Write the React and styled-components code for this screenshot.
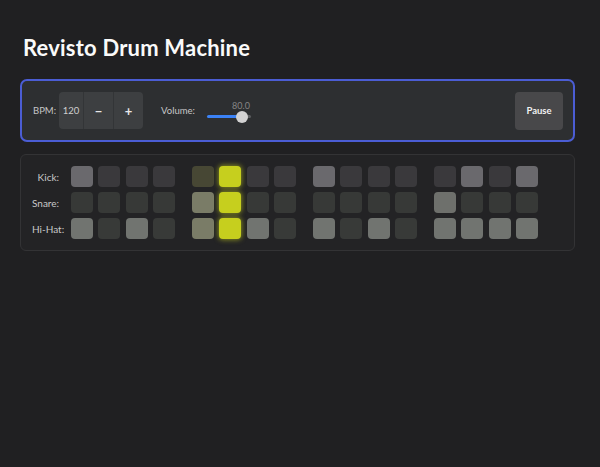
import React from "react";
import styled, { createGlobalStyle, css } from "styled-components";

const Global = createGlobalStyle`
  html, body { margin: 0; padding: 0; background: #202022; }
  body { font-family: Lato, "Noto Sans", "DejaVu Sans", sans-serif; color: #ddd; height: 467px; overflow: hidden; }
`;

const Page = styled.div`
  width: 555px;
  padding: 30px 0 0 20px;
  display: flex;
  flex-direction: column;
`;

const Title = styled.h1`
  margin: 0 0 13px 3px;
  font-size: 22px;
  font-weight: 700;
  color: #fafafa;
  line-height: 36px;
  letter-spacing: 0.2px;
`;

const Controls = styled.div`
  display: flex;
  align-items: center;
  height: 59px;
  padding: 0 10px 0 11px;
  border: 2px solid #4b5dd4;
  border-radius: 7px;
  background: #2d2f31;
`;

const Label = styled.span`
  font-size: 9.5px;
  color: #c6c6c6;
  margin-right: ${(p) => p.$mr || 0}px;
`;

const Stepper = styled.div`
  display: flex;
  height: 37px;
  border-radius: 4px;
  overflow: hidden;
  background: #3d3f41;
  margin-right: 18px;
`;

const StepValue = styled.div`
  width: 24px;
  display: flex;
  align-items: center;
  justify-content: center;
  font-size: 9.5px;
  color: #cfcfcf;
`;

const StepButton = styled.div`
  box-sizing: border-box;
  width: 30px;
  display: flex;
  align-items: center;
  justify-content: center;
  border-left: 1px solid #333537;
  font-size: 13px;
  font-weight: 700;
  color: #e8e8e8;
`;

const Slider = styled.div`
  width: 44px;
  display: flex;
  flex-direction: column;
  margin-top: 1px;
`;

const SliderValue = styled.div`
  font-size: 9px;
  line-height: 11px;
  height: 11px;
  text-align: right;
  padding-right: 1px;
  color: #858585;
`;

const TrackWrap = styled.div`
  position: relative;
  height: 12px;
  display: flex;
  align-items: center;
`;

const Track = styled.div`
  width: 100%;
  height: 3px;
  border-radius: 2px;
  background: linear-gradient(to right, #3b82f6 0 78%, #5a5c5e 78% 100%);
`;

const Thumb = styled.div`
  position: absolute;
  left: 29px;
  top: 0;
  width: 12px;
  height: 12px;
  border-radius: 50%;
  background: #d2d2d2;
`;

const Spacer = styled.div`
  flex: 1;
`;

const PauseButton = styled.button`
  width: 48px;
  height: 38px;
  border: none;
  border-radius: 4px;
  background: #48484a;
  color: #f2f2f2;
  font-family: inherit;
  font-size: 9.5px;
  font-weight: 700;
  padding: 0;
`;

const Sequencer = styled.div`
  margin-top: 12px;
  padding: 11px;
  border: 1px solid #333335;
  border-radius: 6px;
  background: #232325;
  display: flex;
  flex-direction: column;
  gap: 5px;
`;

const Row = styled.div`
  display: flex;
  align-items: center;
`;

const RowLabel = styled.div`
  width: 27px;
  margin-right: 12px;
  text-align: right;
  font-size: 10px;
  color: #c8c8c8;
  white-space: nowrap;
`;

const Groups = styled.div`
  display: flex;
  gap: 17px;
`;

const Group = styled.div`
  display: flex;
  gap: 5.33px;
`;

const palette = {
  kick: { on: "#6a696d", off: "#3a393c" },
  snare: { on: "#6e706c", off: "#373937" },
  hihat: { on: "#717470", off: "#383a38" },
};

const Cell = styled.div`
  width: 22px;
  height: 21px;
  border-radius: 4px;
  background: ${(p) => (p.$on ? palette[p.$kind].on : palette[p.$kind].off)};
  ${(p) =>
    p.$prev &&
    css`
      background: ${p.$on ? "#7a7c67" : "#474734"};
    `}
  ${(p) =>
    p.$current &&
    css`
      background: #c6cf1e;
      box-shadow: 0 0 5px 1px rgba(205, 215, 30, 0.55);
    `}
`;

const rows = [
  { name: "Kick:", kind: "kick", pattern: "1000000010000101" },
  { name: "Snare:", kind: "snare", pattern: "0000110000001000" },
  { name: "Hi-Hat:", kind: "hihat", pattern: "1010111010101111" },
];

export default function App() {
  return (
    <>
      <Global />
      <Page>
        <Title>Revisto Drum Machine</Title>
        <Controls>
          <Label $mr={3}>BPM:</Label>
          <Stepper>
            <StepValue>120</StepValue>
            <StepButton>−</StepButton>
            <StepButton>+</StepButton>
          </Stepper>
          <Label $mr={12}>Volume:</Label>
          <Slider>
            <SliderValue>80.0</SliderValue>
            <TrackWrap>
              <Track />
              <Thumb />
            </TrackWrap>
          </Slider>
          <Spacer />
          <PauseButton>Pause</PauseButton>
        </Controls>
        <Sequencer>
          {rows.map((r) => (
            <Row key={r.name}>
              <RowLabel>{r.name}</RowLabel>
              <Groups>
                {[0, 1, 2, 3].map((g) => (
                  <Group key={g}>
                    {[0, 1, 2, 3].map((i) => {
                      const idx = g * 4 + i;
                      return (
                        <Cell
                          key={i}
                          $kind={r.kind}
                          $on={r.pattern[idx] === "1"}
                          $prev={idx === 4}
                          $current={idx === 5}
                        />
                      );
                    })}
                  </Group>
                ))}
              </Groups>
            </Row>
          ))}
        </Sequencer>
      </Page>
    </>
  );
}
